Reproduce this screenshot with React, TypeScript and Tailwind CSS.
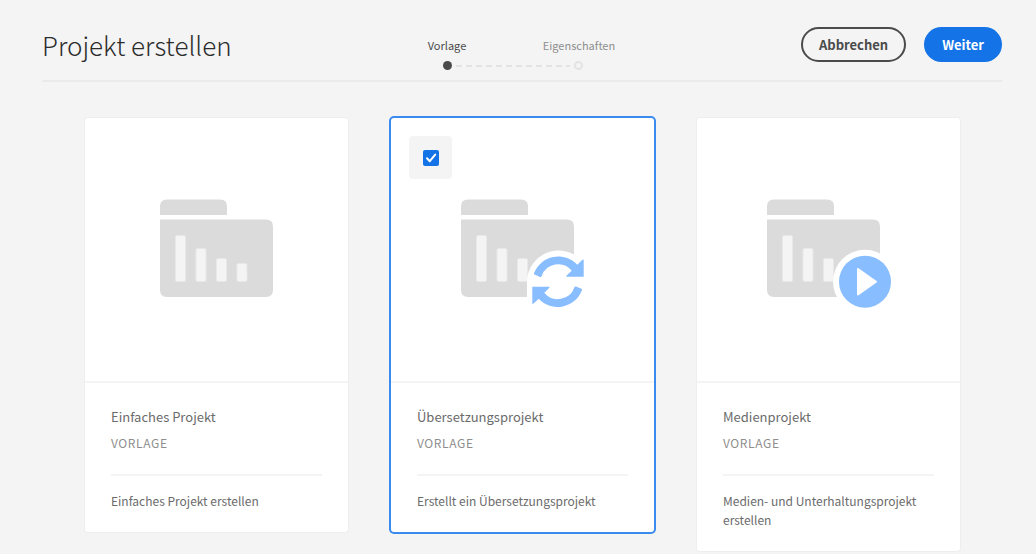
import { useState } from "react";

type Kind = "simple" | "translation" | "media";

interface Template {
  kind: Kind;
  title: string;
  description: string;
}

const templates: Template[] = [
  { kind: "simple", title: "Einfaches Projekt", description: "Einfaches Projekt erstellen" },
  { kind: "translation", title: "Übersetzungsprojekt", description: "Erstellt ein Übersetzungsprojekt" },
  { kind: "media", title: "Medienprojekt", description: "Medien- und Unterhaltungsprojekt erstellen" },
];

const refreshArrow =
  "M73 74.3 A26 26 0 0 1 116.3 65.7 L121.4 60.8 Q122.7 60 122.7 61.5 V77.7 H106 Q104.8 77.4 105.6 76.6 L110.7 71.7 A17.5 17.5 0 0 0 80.6 77.2 Q80 78.3 79 77.9 L73.6 75.6 Q72.7 75.2 73 74.3 Z";

function FolderIcon({ kind }: { kind: Kind }) {
  const simple = kind === "simple";
  const width = simple ? 113 : 124;
  const height = simple ? 98 : 109;
  return (
    <svg width={width} height={height} viewBox={`0 0 ${width} ${height}`} aria-hidden="true">
      <path d="M0 16 V7 Q0 0.5 7 0.5 H60 Q67 0.5 67 7 V16 Z" fill="#dbdbdb" />
      <path d="M0 20.5 H106 Q113 20.5 113 27.5 V91 Q113 98 106 98 H7 Q0 98 0 91 Z" fill="#dbdbdb" />
      <g fill="#f4f4f4" stroke="#e8e8e8" strokeWidth="1">
        <rect x="15.5" y="36.5" width="10" height="46" rx="1.5" />
        <rect x="36" y="49.5" width="10" height="33" rx="1.5" />
        <rect x="56.5" y="59.5" width="10" height="23" rx="1.5" />
        {simple && <rect x="77" y="64.5" width="10" height="18" rx="1.5" />}
      </g>
      {kind === "translation" && (
        <>
          <path d="M66 109 V82.7 A31.5 31.5 0 0 1 124 66 V109 Z" fill="#fff" />
          <path d={refreshArrow} fill="#88bdff" />
          <path d={refreshArrow} fill="#88bdff" transform="rotate(180 97 82.7)" />
        </>
      )}
      {kind === "media" && (
        <>
          <circle cx="98" cy="82.7" r="32" fill="#fff" />
          <circle cx="98" cy="82.7" r="26" fill="#88bdff" />
          <path d="M91 70 L109 82.7 L91 95.4 Z" fill="#fff" stroke="#fff" strokeWidth="2" strokeLinejoin="round" />
        </>
      )}
    </svg>
  );
}

function Steps() {
  return (
    <div className="mr-[18px] w-[264px] pt-[9px]">
      <ol className="grid grid-cols-2 text-center text-[11px] leading-[18px]">
        <li aria-current="step" className="text-[#4b4b4b]">Vorlage</li>
        <li className="text-[#8e8e8e]">Eigenschaften</li>
      </ol>
      <div className="mt-[7px] flex items-center px-[62px]" aria-hidden="true">
        <span className="size-[9px] rounded-full bg-[#4b4b4b]" />
        <span className="mx-1 h-[2px] flex-1 bg-[repeating-linear-gradient(90deg,#e3e3e3_0_6px,transparent_6px_10px)]" />
        <span className="size-[9px] rounded-full border-2 border-[#e3e3e3]" />
      </div>
    </div>
  );
}

function TemplateCard({
  template,
  selected,
  onToggle,
}: {
  template: Template;
  selected: boolean;
  onToggle: () => void;
}) {
  return (
    <article
      onClick={onToggle}
      className={
        selected
          ? "relative rounded-[3px] bg-white ring-2 ring-[#3b8bee]"
          : "relative rounded-[3px] bg-white ring-1 ring-[#eeeeee]"
      }
    >
      {selected && (
        <label
          onClick={(event) => event.stopPropagation()}
          className="absolute top-[18px] left-[18px] flex size-[43px] items-center justify-center rounded bg-[#f4f4f4]"
        >
          <span className="grid place-items-center">
            <input
              type="checkbox"
              checked={selected}
              onChange={onToggle}
              aria-label={template.title}
              className="col-start-1 row-start-1 size-4 appearance-none rounded-[2px] bg-[#1473e6]"
            />
            <svg className="pointer-events-none col-start-1 row-start-1" width="16" height="16" viewBox="0 0 16 16" aria-hidden="true">
              <path d="M4 8.3 L6.8 11.2 L12.2 4.6" fill="none" stroke="#fff" strokeWidth="2" strokeLinecap="round" strokeLinejoin="round" />
            </svg>
          </span>
        </label>
      )}
      <div className="flex aspect-[263/265] items-start justify-center border-b-2 border-[#f4f4f4] pt-[81px]">
        <FolderIcon kind={template.kind} />
      </div>
      <div className="px-[26px] pt-[23px] pb-[22px] text-[#6b6b6b]">
        <h2 className="text-[13px] leading-[22px]">{template.title}</h2>
        <p className="mt-[6px] text-[12px] leading-[18px] tracking-wider text-[#8e8e8e]">VORLAGE</p>
        <hr className="mt-[22px] border-t-2 border-[#f4f4f4]" />
        <p className="mt-[15px] text-[12px] leading-[19px]">{template.description}</p>
      </div>
    </article>
  );
}

export default function App() {
  const [selected, setSelected] = useState<Kind | null>("translation");

  return (
    <div className="min-h-screen bg-[#f4f4f4] font-['Noto_Sans_CJK_JP','Noto_Sans',sans-serif]">
      <header className="mr-[34px] ml-[42px] flex h-[82px] items-start border-b-2 border-[#eaeaea] pt-[27px]">
        <h1 className="flex-1 text-[26px] leading-[36px] font-light whitespace-nowrap text-[#2c2c2c]">Projekt erstellen</h1>
        <Steps />
        <div className="flex flex-1 justify-end gap-[18px] text-[13px] font-bold">
          <button type="button" className="h-[35px] rounded-full border-2 border-[#4b4b4b] px-4 text-[#4b4b4b]">
            Abbrechen
          </button>
          <button type="button" className="h-[35px] rounded-full bg-[#1473e6] px-[18px] text-white">
            Weiter
          </button>
        </div>
      </header>
      <main className="mt-[36px] grid grid-cols-3 items-start gap-[43px] pr-[76px] pl-[85px]">
        {templates.map((template) => (
          <TemplateCard
            key={template.kind}
            template={template}
            selected={selected === template.kind}
            onToggle={() => setSelected(selected === template.kind ? null : template.kind)}
          />
        ))}
      </main>
    </div>
  );
}
